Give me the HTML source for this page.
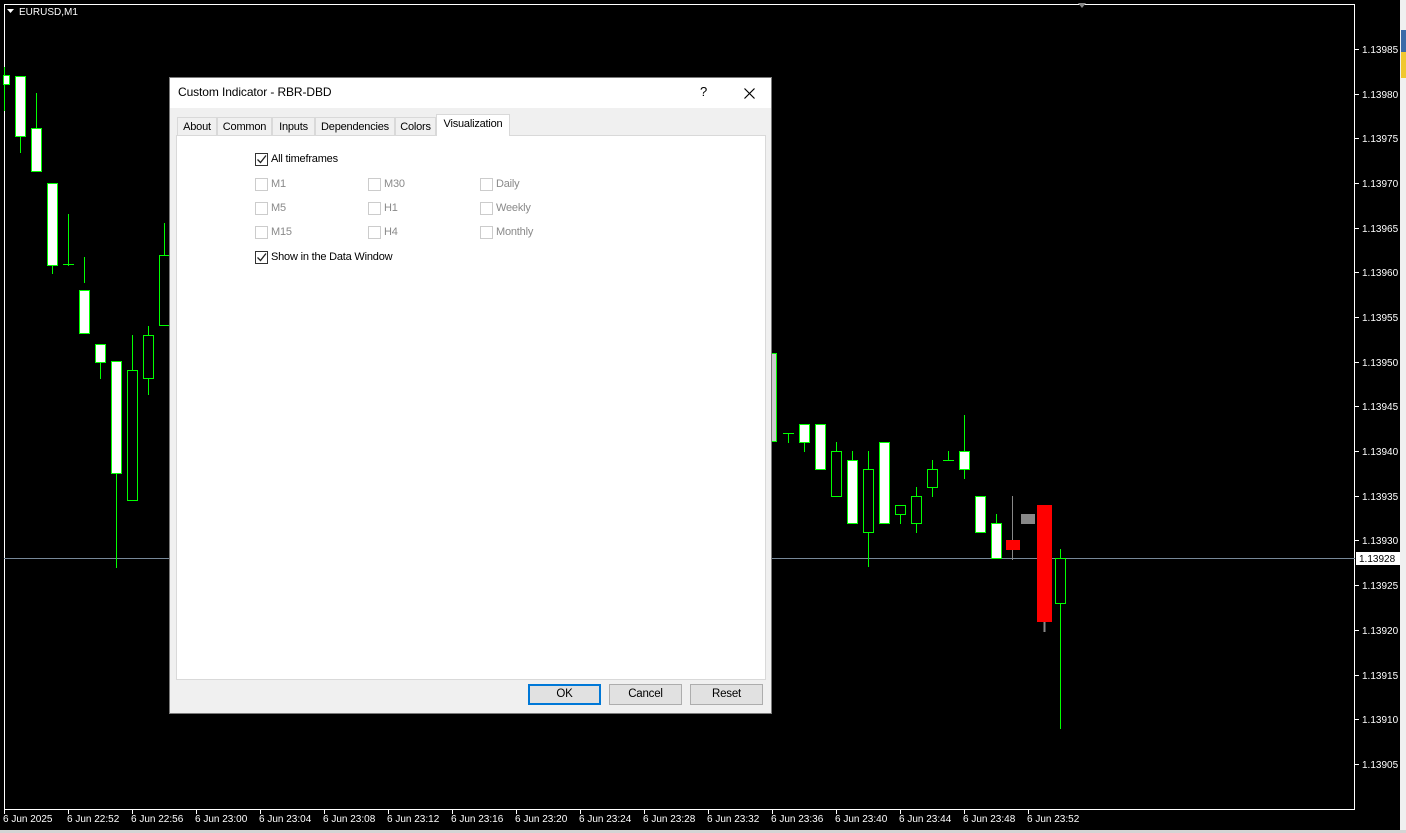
<!DOCTYPE html>
<html><head><meta charset="utf-8"><style>
*{margin:0;padding:0;box-sizing:border-box}
body{width:1406px;height:833px;background:#000;position:relative;overflow:hidden;font-family:"Liberation Sans",sans-serif}
svg{position:absolute;left:0;top:0}
.dlg{position:absolute;left:169px;top:77px;width:603px;height:637px;background:#f0f0f0;border:1px solid #7a7a7a;font-size:11px;color:#000;letter-spacing:-0.2px}
.title{height:30px;background:#fff;position:relative}
.title span{position:absolute;left:8px;top:7px;font-size:12px;letter-spacing:-0.1px}
.tabs{position:absolute;top:38px;left:7px;height:19px}
.tab{position:absolute;top:1px;height:19px;border:1px solid #d9d9d9;border-bottom:none;background:#f0f0f0;padding:3px 0 0 0;text-align:center;white-space:nowrap}
.tab.sel{top:-2px;height:22px;background:#fff;z-index:2;padding-top:3px}
.panel{position:absolute;left:6px;top:57px;width:590px;height:545px;background:#fff;border:1px solid #d9d9d9}
.cb{position:absolute;width:13px;height:13px;border:1px solid #ccc;background:#fff}
.cb.on{border-color:#333}
.lab{position:absolute;font-size:11px;white-space:nowrap}
.dis{color:#8a8a8a}
.btn{position:absolute;top:606px;width:73px;height:21px;background:#e1e1e1;border:1px solid #adadad;text-align:center;line-height:19px;font-size:11.5px}
</style></head><body>
<svg width="1406" height="833" font-family="Liberation Sans, sans-serif">
<rect x="4.5" y="4.5" width="1350" height="805" fill="none" stroke="#fff"/>
<line x1="4" y1="558.5" x2="1355" y2="558.5" stroke="#778899"/>
<path d="M1078 3 l4 5 l4-5z" fill="#888"/>
<path d="M7 9 h7 l-3.5 4z" fill="#fff"/>
<text x="19" y="15" fill="#fff" font-size="10">EURUSD,M1</text>
<g stroke="#00ff00" stroke-width="1">
<line x1="4.5" y1="67" x2="4.5" y2="111"/><rect x="3.5" y="75.5" width="6" height="9" fill="#fff"/>
<line x1="20.5" y1="136" x2="20.5" y2="153"/><rect x="15.5" y="76.5" width="10" height="60" fill="#fff"/>
<line x1="36.5" y1="93" x2="36.5" y2="128"/><rect x="31.5" y="128.5" width="10" height="43" fill="#fff"/>
<line x1="52.5" y1="265" x2="52.5" y2="274"/><rect x="47.5" y="183.5" width="10" height="82" fill="#fff"/>
<line x1="68.5" y1="214" x2="68.5" y2="266"/><line x1="63" y1="264.5" x2="74" y2="264.5"/>
<line x1="84.5" y1="257" x2="84.5" y2="283"/><rect x="79.5" y="290.5" width="10" height="43" fill="#fff"/>
<line x1="100.5" y1="353" x2="100.5" y2="379"/><rect x="95.5" y="344.5" width="10" height="18" fill="#fff"/>
<line x1="116.5" y1="473" x2="116.5" y2="568"/><rect x="111.5" y="361.5" width="10" height="112" fill="#fff"/>
<line x1="132.5" y1="335" x2="132.5" y2="370"/><rect x="127.5" y="370.5" width="10" height="130" fill="#000"/>
<line x1="148.5" y1="326" x2="148.5" y2="395"/><rect x="143.5" y="335.5" width="10" height="43" fill="#000"/>
<line x1="164.5" y1="223" x2="164.5" y2="255"/><rect x="159.5" y="255.5" width="10" height="70" fill="#000"/>
<rect x="770.5" y="353.5" width="6" height="88" fill="#ccc"/>
<line x1="788.5" y1="433" x2="788.5" y2="443"/><line x1="783" y1="433.5" x2="794" y2="433.5"/>
<line x1="804.5" y1="442" x2="804.5" y2="452"/><rect x="799.5" y="424.5" width="10" height="18" fill="#fff"/>
<rect x="815.5" y="424.5" width="10" height="45" fill="#fff"/>
<line x1="836.5" y1="442" x2="836.5" y2="451"/><rect x="831.5" y="451.5" width="10" height="45" fill="#000"/>
<line x1="852.5" y1="451" x2="852.5" y2="460"/><rect x="847.5" y="460.5" width="10" height="63" fill="#fff"/>
<line x1="868.5" y1="451" x2="868.5" y2="567"/><rect x="863.5" y="469.5" width="10" height="63" fill="#000"/>
<rect x="879.5" y="442.5" width="10" height="81" fill="#fff"/>
<line x1="900.5" y1="514" x2="900.5" y2="524"/><rect x="895.5" y="505.5" width="10" height="9" fill="#000"/>
<line x1="916.5" y1="487" x2="916.5" y2="533"/><rect x="911.5" y="496.5" width="10" height="27" fill="#000"/>
<line x1="932.5" y1="460" x2="932.5" y2="497"/><rect x="927.5" y="469.5" width="10" height="18" fill="#000"/>
<line x1="948.5" y1="451" x2="948.5" y2="460"/><line x1="943" y1="460.5" x2="954" y2="460.5"/>
<line x1="964.5" y1="415" x2="964.5" y2="479"/><rect x="959.5" y="451.5" width="10" height="18" fill="#fff"/>
<rect x="975.5" y="496.5" width="10" height="36" fill="#fff"/>
<line x1="996.5" y1="514" x2="996.5" y2="523"/><rect x="991.5" y="523.5" width="10" height="35" fill="#fff"/>
<line x1="1060.5" y1="549" x2="1060.5" y2="729"/><rect x="1055.5" y="558.5" width="10" height="45" fill="#000"/>
</g>
<line x1="1012.5" y1="496" x2="1012.5" y2="560" stroke="#888"/>
<rect x="1006" y="540" width="14" height="10" fill="#f00"/>
<rect x="1021" y="514" width="14" height="10" fill="#888"/>
<line x1="1044.5" y1="620" x2="1044.5" y2="632" stroke="#888" stroke-width="2"/>
<rect x="1037" y="505" width="15" height="117" fill="#f00"/>
<g fill="#fff" font-size="10">
<text x="1362" y="53">1.13985</text><text x="1362" y="98">1.13980</text><text x="1362" y="142">1.13975</text><text x="1362" y="187">1.13970</text><text x="1362" y="232">1.13965</text><text x="1362" y="276">1.13960</text><text x="1362" y="321">1.13955</text><text x="1362" y="366">1.13950</text><text x="1362" y="410">1.13945</text><text x="1362" y="455">1.13940</text><text x="1362" y="500">1.13935</text><text x="1362" y="544">1.13930</text><text x="1362" y="589">1.13925</text><text x="1362" y="634">1.13920</text><text x="1362" y="679">1.13915</text><text x="1362" y="723">1.13910</text><text x="1362" y="768">1.13905</text>
</g>
<g stroke="#fff"><path d="M1355 49.5h4M1355 94.5h4M1355 138.5h4M1355 183.5h4M1355 228.5h4M1355 272.5h4M1355 317.5h4M1355 362.5h4M1355 406.5h4M1355 451.5h4M1355 496.5h4M1355 540.5h4M1355 585.5h4M1355 630.5h4M1355 675.5h4M1355 719.5h4M1355 764.5h4"/>
<path d="M4.5 810v4M68.5 810v4M132.5 810v4M196.5 810v4M260.5 810v4M324.5 810v4M388.5 810v4M452.5 810v4M516.5 810v4M580.5 810v4M644.5 810v4M708.5 810v4M772.5 810v4M836.5 810v4M900.5 810v4M964.5 810v4M1028.5 810v4"/></g>
<rect x="1356" y="552" width="44" height="13" fill="#fff"/>
<text x="1359" y="562" font-size="10" fill="#000">1.13928</text>
<g fill="#fff" font-size="10">
<text x="3" y="822">6 Jun 2025</text><text x="67" y="822">6 Jun 22:52</text><text x="131" y="822">6 Jun 22:56</text><text x="195" y="822">6 Jun 23:00</text><text x="259" y="822">6 Jun 23:04</text><text x="323" y="822">6 Jun 23:08</text><text x="387" y="822">6 Jun 23:12</text><text x="451" y="822">6 Jun 23:16</text><text x="515" y="822">6 Jun 23:20</text><text x="579" y="822">6 Jun 23:24</text><text x="643" y="822">6 Jun 23:28</text><text x="707" y="822">6 Jun 23:32</text><text x="771" y="822">6 Jun 23:36</text><text x="835" y="822">6 Jun 23:40</text><text x="899" y="822">6 Jun 23:44</text><text x="963" y="822">6 Jun 23:48</text><text x="1027" y="822">6 Jun 23:52</text>
</g>
<rect x="0" y="830" width="1406" height="3" fill="#d4d4d4"/>
<rect x="1400" y="0" width="6" height="830" fill="#f0f0f0"/>
<rect x="1401" y="30" width="5" height="22" fill="#3b6aa8"/>
<rect x="1401" y="52" width="5" height="26" fill="#f0c830"/>
</svg>
<div class="dlg">
<div class="title"><span>Custom Indicator - RBR-DBD</span>
<span style="left:530px;top:6px;font-size:13px">?</span>
<svg style="left:574px;top:10px" width="11" height="11"><path d="M0.5 0.5L10.5 10.5M10.5 0.5L0.5 10.5" stroke="#000" stroke-width="1.2"/></svg></div>
<div class="tabs">
<div class="tab" style="left:0;width:40px">About</div>
<div class="tab" style="left:40px;width:55px">Common</div>
<div class="tab" style="left:95px;width:43px">Inputs</div>
<div class="tab" style="left:138px;width:80px">Dependencies</div>
<div class="tab" style="left:218px;width:41px">Colors</div>
<div class="tab sel" style="left:259px;width:74px">Visualization</div>
</div>
<div class="panel">
<div class="cb on" style="left:78px;top:17px"><svg width="11" height="11" style="position:absolute;left:0;top:0"><path d="M1.5 5.5l3 3l5.5-7" stroke="#222" fill="none" stroke-width="1.3"/></svg></div><div class="lab" style="left:94px;top:17px">All timeframes</div>
<div class="cb" style="left:78px;top:42px"></div><div class="lab dis" style="left:94px;top:42px">M1</div>
<div class="cb" style="left:78px;top:66px"></div><div class="lab dis" style="left:94px;top:66px">M5</div>
<div class="cb" style="left:78px;top:90px"></div><div class="lab dis" style="left:94px;top:90px">M15</div>
<div class="cb" style="left:191px;top:42px"></div><div class="lab dis" style="left:207px;top:42px">M30</div>
<div class="cb" style="left:191px;top:66px"></div><div class="lab dis" style="left:207px;top:66px">H1</div>
<div class="cb" style="left:191px;top:90px"></div><div class="lab dis" style="left:207px;top:90px">H4</div>
<div class="cb" style="left:303px;top:42px"></div><div class="lab dis" style="left:319px;top:42px">Daily</div>
<div class="cb" style="left:303px;top:66px"></div><div class="lab dis" style="left:319px;top:66px">Weekly</div>
<div class="cb" style="left:303px;top:90px"></div><div class="lab dis" style="left:319px;top:90px">Monthly</div>
<div class="cb on" style="left:78px;top:115px"><svg width="11" height="11" style="position:absolute;left:0;top:0"><path d="M1.5 5.5l3 3l5.5-7" stroke="#222" fill="none" stroke-width="1.3"/></svg></div><div class="lab" style="left:94px;top:115px">Show in the Data Window</div>
</div>
<div class="btn" style="left:358px;border:2px solid #0078d7;line-height:17px">OK</div>
<div class="btn" style="left:439px">Cancel</div>
<div class="btn" style="left:520px">Reset</div>
</div>
</body></html>
